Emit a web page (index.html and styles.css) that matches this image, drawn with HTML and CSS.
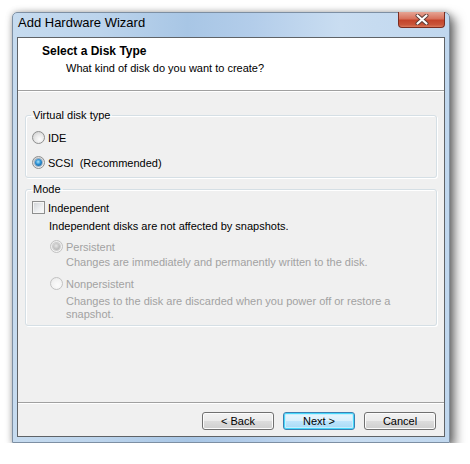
FILE: index.html
```html
<!DOCTYPE html>
<html lang="en">
<head>
  <meta charset="UTF-8" />
  <title>Add Hardware Wizard</title>
  <link rel="stylesheet" href="styles.css">
</head>
<body>
  <div class="window">
    <div class="titlebar">
      <span class="title">Add Hardware Wizard</span>
      <div class="close">
        <svg width="16" height="11" viewBox="0 0 16 11">
          <path d="M3.5 1.5 L12.5 9.5 M12.5 1.5 L3.5 9.5" stroke="#5a3b36" stroke-width="4" stroke-linecap="round" fill="none"/>
          <path d="M3.5 1.5 L12.5 9.5 M12.5 1.5 L3.5 9.5" stroke="#fff" stroke-width="2.2" stroke-linecap="round" fill="none"/>
        </svg>
      </div>
    </div>

    <div class="client">
      <div class="header">
        <h1>Select a Disk Type</h1>
        <p>What kind of disk do you want to create?</p>
      </div>
      <div class="separator"></div>

      <div class="content">
        <fieldset class="group group-type">
          <legend>Virtual disk type</legend>
          <div class="row"><span class="radio"></span>IDE</div>
          <div class="row row-scsi"><span class="radio on"></span>SCSI<span class="note">(Recommended)</span></div>
        </fieldset>

        <fieldset class="group group-mode">
          <legend>Mode</legend>
          <div class="row"><span class="check"></span>Independent</div>
          <div class="hint">Independent disks are not affected by snapshots.</div>
          <div class="row sub disabled row-persist"><span class="radio on"></span>Persistent</div>
          <div class="desc disabled">Changes are immediately and permanently written to the disk.</div>
          <div class="row sub disabled row-nonpersist"><span class="radio"></span>Nonpersistent</div>
          <div class="desc desc-wrap disabled">Changes to the disk are discarded when you power off or restore a<br>snapshot.</div>
        </fieldset>
      </div>

      <div class="separator"></div>
      <div class="footer">
        <button class="btn">&lt; Back</button>
        <button class="btn default">Next &gt;</button>
        <button class="btn">Cancel</button>
      </div>
    </div>
  </div>
</body>
</html>
```

FILE: styles.css
```css
body {
  margin: 0;
  background: #fff;
  font-family: 'Liberation Sans', Arial, sans-serif;
  font-size: 11px;
  color: #000;
}
.window {
  margin: 12px 0 0 12px;
  width: 438px;
  height: 431px;
  box-sizing: border-box;
  border: 1px solid #7d8fa3;
  border-radius: 5px 5px 0 0;
  background: linear-gradient(to right, #c6dbef 0%, #bcd4ec 20%, #a8c6e5 40%, #b3cdea 55%, #c9ddf1 75%, #c0d7ee 100%);
  box-shadow: 5px 5px 11px rgba(0,0,0,0.55), 0 0 6px rgba(0,0,0,0.25);
  display: flex;
  flex-direction: column;
}
.titlebar {
  height: 24px;
  display: flex;
  align-items: flex-start;
  padding-left: 5px;
  padding-right: 4px;
}
.title {
  font-size: 13px;
  line-height: 16px;
  padding-top: 2px;
  color: #000;
}
.close {
  margin-left: auto;
  margin-top: -1px;
  width: 47px;
  height: 16px;
  box-sizing: border-box;
  border: 1px solid #7a2c20;
  border-top: none;
  border-radius: 0 0 4px 4px;
  background: linear-gradient(to bottom, #e6a595 0%, #d7715c 45%, #c4442b 55%, #c9553a 85%, #dc7a5c 100%);
  display: flex;
  align-items: center;
  justify-content: center;
}
.client {
  margin: 0 4px;
  height: 400px;
  box-sizing: border-box;
  border: 1px solid #5f6367;
  background: #f0f0f0;
  display: flex;
  flex-direction: column;
}
.header {
  height: 52px;
  box-sizing: border-box;
  background: #fff;
  padding: 6px 0 0 24px;
}
.header h1 {
  margin: 0;
  font-size: 12px;
  line-height: 15px;
  font-weight: bold;
}
.header p {
  margin: 2px 0 0 24px;
  line-height: 15px;
}
.separator {
  height: 1px;
  border-top: 1px solid #a0a0a0;
  background: #fff;
}
.content {
  flex: 1;
  padding: 0 7px;
}
.group {
  margin: 0;
  padding: 0 4px 0 6px;
  border: 1px solid #d5dfe5;
  border-radius: 3px;
  box-shadow: inset 1px 1px 0 #fff, 1px 1px 0 #fff;
}
.group legend {
  padding: 0 2px;
  margin-left: -1px;
  line-height: 14px;
}
.group-type {
  margin-top: 16px;
  padding-top: 8px;
  padding-bottom: 7px;
}
.group-mode {
  margin-top: 4px;
  padding-top: 4px;
  padding-bottom: 4px;
}
.row {
  display: flex;
  align-items: center;
  height: 15px;
}
.row-scsi {
  margin-top: 10px;
}
.note {
  margin-left: 6px;
}
.radio, .check {
  width: 13px;
  height: 13px;
  box-sizing: border-box;
  margin-right: 3px;
  flex: none;
}
.radio {
  border: 1px solid #8e8f8f;
  border-radius: 50%;
  background: radial-gradient(circle at 60% 65%, #fdfdfd 0%, #e9e9e9 45%, #c9c9c9 100%);
  display: flex;
  align-items: center;
  justify-content: center;
}
.radio.on::after {
  content: "";
  width: 7px;
  height: 7px;
  border-radius: 50%;
  background: radial-gradient(circle at 45% 40%, #a8e4fb 0%, #2a8fd3 45%, #0d4f86 100%);
  box-shadow: 0 0 0 1px rgba(20,70,120,0.35);
}
.check {
  border: 1px solid #8e8f8f;
  background: linear-gradient(135deg, #cfd2d6 0%, #eef0f2 60%, #fbfbfb 100%);
  box-shadow: inset 0 0 0 1px #f5f5f5;
}
.hint {
  margin: 4px 0 0 17px;
  line-height: 15px;
}
.sub {
  margin-left: 18px;
}
.row-persist {
  margin-top: 5px;
}
.row-nonpersist {
  margin-top: 6px;
}
.disabled {
  color: #a2a2a2;
}
.disabled .radio {
  border-color: #c2c2c2;
  background: radial-gradient(circle at 60% 65%, #fbfbfb 0%, #f1f1f1 60%, #e2e2e2 100%);
}
.disabled .radio.on::after {
  background: radial-gradient(circle at 45% 40%, #e6e6e6 0%, #bcbcbc 60%, #a8a8a8 100%);
  box-shadow: 0 0 0 1px rgba(120,120,120,0.3);
}
.desc {
  margin: 1px 0 0 34px;
  line-height: 15px;
}
.desc-wrap {
  margin-top: 4px;
  line-height: 13px;
}
.footer {
  height: 32px;
  box-sizing: border-box;
  display: flex;
  justify-content: flex-end;
  gap: 9px;
  padding: 8px 8px 0 0;
}
.btn {
  width: 72px;
  height: 18px;
  padding: 0;
  font-family: inherit;
  font-size: 11px;
  color: #000;
  border: 1px solid #707070;
  border-radius: 3px;
  background: linear-gradient(to bottom, #f2f2f2 0%, #ebebeb 49%, #dddddd 50%, #cfcfcf 100%);
  box-shadow: inset 0 0 0 1px #fcfcfc;
}
.btn.default {
  border-color: #3c7fb1;
  background: linear-gradient(to bottom, #eaf6fd 0%, #d9f0fc 49%, #bee6fd 50%, #a7d9f5 100%);
  box-shadow: inset 0 0 0 1px #48d8fb, inset 0 0 0 2px #c8eefd;
}
```
